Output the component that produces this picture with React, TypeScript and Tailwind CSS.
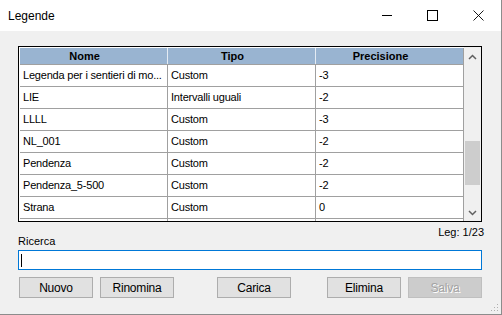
import React from 'react';

type Row = { nome: string; tipo: string; precisione: string };

const rows: Row[] = [
  { nome: 'Legenda per i sentieri di mo...', tipo: 'Custom', precisione: '-3' },
  { nome: 'LIE', tipo: 'Intervalli uguali', precisione: '-2' },
  { nome: 'LLLL', tipo: 'Custom', precisione: '-3' },
  { nome: 'NL_001', tipo: 'Custom', precisione: '-2' },
  { nome: 'Pendenza', tipo: 'Custom', precisione: '-2' },
  { nome: 'Pendenza_5-500', tipo: 'Custom', precisione: '-2' },
  { nome: 'Strana', tipo: 'Custom', precisione: '0' },
  { nome: '', tipo: '', precisione: '' },
];

const font = { fontFamily: '"Liberation Sans", Arial, sans-serif' };

// Windows-style push button
const WinButton: React.FC<{ label: string; disabled?: boolean; className?: string }> = ({ label, disabled, className }) => (
  <button
    type="button"
    className={`w-[74px] h-[21px] border text-[12px] leading-none tracking-[-0.2px] flex items-center justify-center ${
      disabled
        ? 'bg-[#cccccc] border-[#bfbfbf] text-[#a3a3a3] [text-shadow:1px_1px_0_#ffffff]'
        : 'bg-[#e1e1e1] border-[#adadad] text-black'
    } ${className ?? ''}`}
  >
    {label}
  </button>
);

export default function App() {
  return (
    <div
      className="w-[502px] h-[315px] bg-[#f0f0f0] border-r border-b border-[#8c8c8c] flex flex-col overflow-hidden"
      style={font}
    >
      {/* Title bar */}
      <div className="h-[31px] bg-white flex items-center shrink-0">
        <span className="pl-[8px] text-[12px] text-black">Legende</span>
        <div className="ml-auto flex items-center h-full">
          <svg width="46" height="31" viewBox="0 0 46 31" className="shrink-0">
            <line x1="18" y1="15.5" x2="28" y2="15.5" stroke="#000" strokeWidth="1" />
          </svg>
          <svg width="46" height="31" viewBox="0 0 46 31" className="shrink-0">
            <rect x="17.5" y="10.5" width="10" height="10" fill="none" stroke="#000" strokeWidth="1" />
          </svg>
          <svg width="46" height="31" viewBox="0 0 46 31" className="shrink-0 mr-[-1px]">
            <path d="M17.5 10.5 L27.5 20.5 M27.5 10.5 L17.5 20.5" stroke="#000" strokeWidth="0.9" />
          </svg>
        </div>
      </div>

      <div className="pl-[18px] pr-[19px] flex flex-col">
        {/* Grid */}
        <div className="mt-[15px] w-[464px] h-[176px] border border-black bg-white flex overflow-hidden">
          <div className="pl-[1px] pt-[1px] flex flex-col w-[445px]">
            <div className="h-[17px] shrink-0 flex bg-[#99b4d1] border-b border-[#a0a0a0] text-[11px] font-bold text-black">
              <div className="w-[148px] border-r border-[#e4ebf3] flex items-center justify-center pr-[18px]">Nome</div>
              <div className="w-[148px] border-r border-[#e4ebf3] flex items-center justify-center pr-[18px]">Tipo</div>
              <div className="w-[148px] border-r border-[#a0a0a0] flex items-center justify-center pr-[18px]">Precisione</div>
            </div>
            {rows.map((r, i) => (
              <div key={i} className="h-[22px] shrink-0 flex border-b border-[#a0a0a0] text-[11px] tracking-[-0.2px] text-black">
                <div className="w-[148px] border-r border-[#a0a0a0] flex items-center pl-[3px] whitespace-nowrap overflow-hidden">{r.nome}</div>
                <div className="w-[148px] border-r border-[#a0a0a0] flex items-center pl-[3px] whitespace-nowrap">{r.tipo}</div>
                <div className="w-[148px] border-r border-[#a0a0a0] flex items-center pl-[3px]">{r.precisione}</div>
              </div>
            ))}
          </div>
          {/* Vertical scrollbar */}
          <div className="w-[17px] bg-[#f0f0f0] flex flex-col items-center">
            <div className="h-[17px] w-full flex items-center justify-center mt-[1px]">
              <svg width="9" height="6" viewBox="0 0 9 6">
                <path d="M1 5 L4.5 1.5 L8 5" fill="none" stroke="#606060" strokeWidth="1.5" />
              </svg>
            </div>
            <div className="mt-[76px] w-[15px] h-[44px] bg-[#cdcdcd]" />
            <div className="mt-auto h-[17px] w-full flex items-center justify-center">
              <svg width="9" height="6" viewBox="0 0 9 6">
                <path d="M1 1 L4.5 4.5 L8 1" fill="none" stroke="#606060" strokeWidth="1.5" />
              </svg>
            </div>
          </div>
        </div>

        {/* Labels */}
        <div className="mt-[4px] h-[21px] flex justify-between text-[11px] text-black">
          <span className="self-end leading-[12px]">Ricerca</span>
          <span className="self-start leading-[12px] mr-[-2px]">Leg: 1/23</span>
        </div>

        {/* Search input */}
        <div className="mt-[3px] w-[464px] h-[20px] bg-white border border-[#0078d7] flex items-center pl-[2px]">
          <span className="w-[1px] h-[13px] bg-black" />
        </div>

        {/* Buttons */}
        <div className="mt-[7px] flex">
          <WinButton label="Nuovo" className="ml-[1px]" />
          <WinButton label="Rinomina" className="ml-[7px]" />
          <WinButton label="Carica" className="ml-[43px]" />
          <WinButton label="Elimina" className="ml-[36px]" />
          <WinButton label="Salva" disabled className="ml-[7px]" />
        </div>
      </div>

      {/* Size grip */}
      <div className="mt-auto self-end mr-[2px] mb-[2px]">
        <svg width="10" height="10" viewBox="0 0 10 10">
          <rect x="8" y="2" width="1" height="1" fill="#b0b0b0" />
          <rect x="5" y="5" width="1" height="1" fill="#b0b0b0" />
          <rect x="8" y="5" width="1" height="1" fill="#b0b0b0" />
          <rect x="2" y="8" width="1" height="1" fill="#b0b0b0" />
          <rect x="5" y="8" width="1" height="1" fill="#b0b0b0" />
          <rect x="8" y="8" width="1" height="1" fill="#b0b0b0" />
        </svg>
      </div>
    </div>
  );
}
